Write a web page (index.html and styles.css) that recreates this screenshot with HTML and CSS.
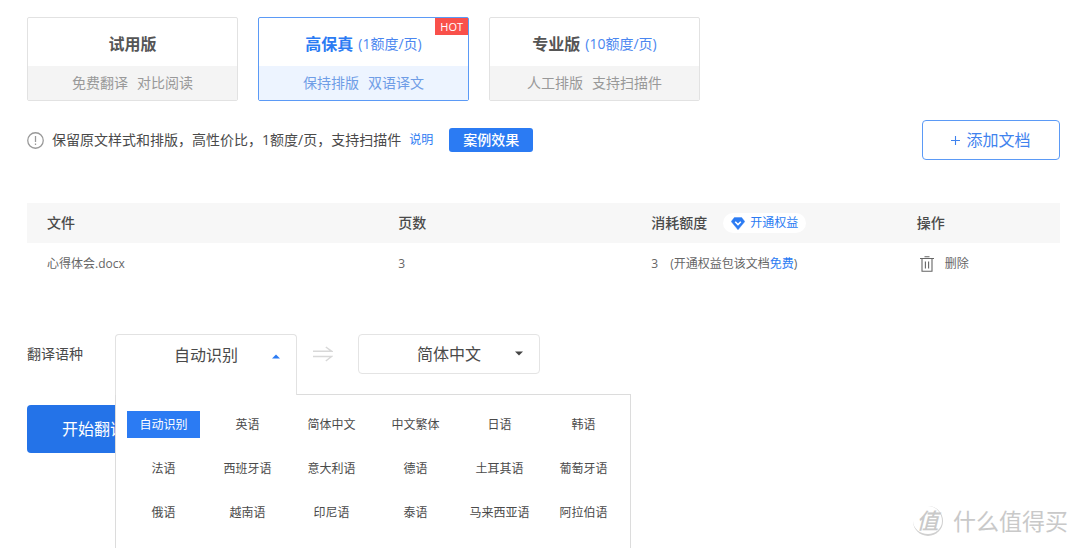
FILE: index.html
```html
<!DOCTYPE html>
<html lang="zh-CN">
<head>
<meta charset="utf-8">
<meta name="viewport" content="width=device-width, initial-scale=1">
<title>文档翻译</title>
<link rel="stylesheet" href="styles.css">
</head>
<body>
<main class="page">
  <div class="plans">
    <button type="button" class="plan">
      <span class="plan-title"><strong>试用版</strong></span>
      <span class="plan-desc"><span>免费翻译</span><span>对比阅读</span></span>
    </button>
    <button type="button" class="plan plan-active">
      <span class="plan-title"><strong>高保真</strong><span class="plan-price">(1额度/页)</span></span>
      <span class="plan-desc"><span>保持排版</span><span>双语译文</span></span>
      <span class="plan-hot">HOT</span>
    </button>
    <button type="button" class="plan">
      <span class="plan-title"><strong>专业版</strong><span class="plan-price">(10额度/页)</span></span>
      <span class="plan-desc"><span>人工排版</span><span>支持扫描件</span></span>
    </button>
  </div>

  <div class="info">
    <svg class="info-icon" width="17" height="17" viewBox="0 0 16 16" aria-hidden="true">
      <circle cx="8" cy="8" r="7.3" fill="none" stroke="#999" stroke-width="1.2"/>
      <path d="M8 3.8v5.6M8 10.8v1.4" stroke="#999" stroke-width="1.2"/>
    </svg>
    <p class="info-text">保留原文样式和排版，高性价比，1额度/页，支持扫描件</p>
    <a class="info-link" href="#">说明</a>
    <button type="button" class="btn-case">案例效果</button>
    <button type="button" class="btn-add"><svg width="9" height="9" viewBox="0 0 9 9" aria-hidden="true"><path d="M4.5 0v9M0 4.5h9" stroke="currentColor" stroke-width="1.1"/></svg>添加文档</button>
  </div>

  <table class="files">
    <thead>
      <tr>
        <th class="col-file">文件</th>
        <th class="col-pages">页数</th>
        <th class="col-cost"><span class="cost-head">消耗额度
          <a class="vip" href="#"><svg width="14" height="13" viewBox="0 0 14 13" aria-hidden="true"><path d="M3.4.4h7.2L13.8 4.6 7 12.8.2 4.6z" fill="#2b7bf3" stroke="#2b7bf3" stroke-width=".4" stroke-linejoin="round"/><path d="M4.2 4.7 7 7.6l2.8-2.9" fill="none" stroke="#fff" stroke-width="1.5"/></svg>开通权益</a></span></th>
        <th>操作</th>
      </tr>
    </thead>
    <tbody>
      <tr>
        <td>心得体会.docx</td>
        <td>3</td>
        <td><span class="cost">3<span>(开通权益包该文档<a href="#">免费</a>)</span></span></td>
        <td><button type="button" class="btn-delete"><svg width="14" height="16" viewBox="0 0 14 16" aria-hidden="true"><path d="M0 2.5h14M4.5.7h5M2 2.5v12.8h10V2.5M5.4 5.5v7M8.6 5.5v7" fill="none" stroke="#666" stroke-width="1.1"/></svg>删除</button></td>
      </tr>
    </tbody>
  </table>

  <div class="languages">
    <label class="lang-label" for="source">翻译语种</label>
    <div class="picker">
      <button type="button" id="source" class="picker-open" aria-haspopup="listbox" aria-expanded="true">自动识别</button>
      <svg class="caret caret-up" width="8" height="5" viewBox="0 0 8 5" aria-hidden="true"><path d="M0 4.5 4 .5l4 4z" fill="#2b7bf3"/></svg>
      <div class="menu" role="listbox" aria-label="翻译语种">
        <button type="button" role="option" class="option option-active" aria-selected="true">自动识别</button>
        <button type="button" role="option" class="option">英语</button>
        <button type="button" role="option" class="option">简体中文</button>
        <button type="button" role="option" class="option">中文繁体</button>
        <button type="button" role="option" class="option">日语</button>
        <button type="button" role="option" class="option">韩语</button>
        <button type="button" role="option" class="option">法语</button>
        <button type="button" role="option" class="option">西班牙语</button>
        <button type="button" role="option" class="option">意大利语</button>
        <button type="button" role="option" class="option">德语</button>
        <button type="button" role="option" class="option">土耳其语</button>
        <button type="button" role="option" class="option">葡萄牙语</button>
        <button type="button" role="option" class="option">俄语</button>
        <button type="button" role="option" class="option">越南语</button>
        <button type="button" role="option" class="option">印尼语</button>
        <button type="button" role="option" class="option">泰语</button>
        <button type="button" role="option" class="option">马来西亚语</button>
        <button type="button" role="option" class="option">阿拉伯语</button>
      </div>
    </div>
    <svg class="arrow" width="20" height="16" viewBox="0 0 20 16" aria-hidden="true"><path d="M0 5.2h18.5L12.8 1M0 10.5h18.5L12.8 15" fill="none" stroke="#d8d8d8" stroke-width="1.5"/></svg>
    <div class="picker">
      <select class="picker-select" aria-label="目标语种">
        <option>简体中文</option>
        <option>英语</option>
      </select>
      <svg class="caret caret-down" width="8" height="5" viewBox="0 0 8 5" aria-hidden="true"><path d="M0 .5h8l-4 4z" fill="#444"/></svg>
    </div>
  </div>

  <button type="button" class="btn-start">开始翻译</button>

  <div class="watermark">
    <span class="watermark-badge">值</span>
    <span>什么值得买</span>
  </div>
</main>
</body>
</html>
```

FILE: styles.css
```css
* {
  box-sizing: border-box;
}

body {
  margin: 0;
  background: #fff;
  color: #4a4a4a;
  font-family: "Open Sans", "Noto Sans CJK SC", sans-serif;
  font-size: 14px;
  line-height: 20px;
}

button,
select {
  margin: 0;
  padding: 0;
  border: 0;
  background: none;
  color: inherit;
  font: inherit;
  cursor: pointer;
}

a {
  color: #2b7bf3;
  text-decoration: none;
}

.page {
  position: relative;
  min-height: 100vh;
  padding: 17px 20px 0 27px;
  overflow: hidden;
}

.plans {
  display: flex;
  gap: 20px;
}

.plan {
  position: relative;
  display: flex;
  flex-direction: column;
  width: 211px;
  border: 1px solid #e2e2e2;
  border-radius: 2px;
}

.plan-title {
  display: flex;
  align-items: center;
  justify-content: center;
  gap: 5px;
  width: 100%;
  height: 48px;
  padding-top: 3px;
  font-size: 16px;
  color: #555;
}

.plan-price {
  font-size: 14px;
  color: #4a86f0;
}

.plan-desc {
  display: flex;
  align-items: center;
  justify-content: center;
  gap: 9px;
  width: 100%;
  height: 34px;
  background: #f4f4f4;
  color: #999;
}

.plan-active {
  border-color: #5b9af6;
}

.plan-active .plan-title {
  color: #2b7bf3;
}

.plan-active .plan-desc {
  background: #edf4ff;
  color: #6f9de6;
}

.plan-hot {
  position: absolute;
  top: 0;
  right: 0;
  padding: 0 5px;
  background: #f9504a;
  color: #fff;
  font-family: "Open Sans", sans-serif;
  font-size: 11px;
  line-height: 17px;
}

.info {
  display: flex;
  align-items: center;
  margin-top: 19px;
}

.info-icon {
  margin-right: 8px;
}

.info-text {
  margin: 0 8px 0 0;
}

.info-link {
  margin-right: 16px;
  font-size: 12px;
}

.btn-case {
  width: 84px;
  height: 24px;
  border-radius: 3px;
  background: #2b7bf3;
  color: #fff;
  font-weight: 500;
}

.btn-add {
  display: flex;
  align-items: center;
  justify-content: center;
  gap: 6px;
  width: 138px;
  height: 40px;
  margin-left: auto;
  border: 1px solid #5b9af6;
  border-radius: 4px;
  color: #3f83ee;
  font-size: 16px;
}

.files {
  width: 100%;
  margin-top: 43px;
  border-collapse: collapse;
  table-layout: fixed;
  text-align: left;
}

.files th {
  height: 40px;
  padding: 0 0 0 20px;
  background: #f7f7f7;
  font-weight: 500;
}

.files td {
  height: 42px;
  padding: 0 0 0 20px;
  color: #666;
  font-size: 12px;
}

.col-file {
  width: 34%;
}

.col-pages {
  width: 24.5%;
}

.col-cost {
  width: 25.7%;
}

.cost-head {
  display: flex;
  align-items: center;
  gap: 16px;
}

.vip {
  display: flex;
  align-items: center;
  gap: 5px;
  padding: 0 8px;
  border-radius: 10px;
  background: #fff;
  font-size: 12px;
  font-weight: 400;
}

.cost {
  display: flex;
  gap: 12px;
}

.btn-delete {
  display: flex;
  align-items: center;
  gap: 11px;
  padding-left: 3px;
}

.languages {
  display: flex;
  align-items: center;
  margin-top: 49px;
}

.lang-label {
  width: 88px;
}

.picker {
  position: relative;
  width: 182px;
  height: 40px;
}

.picker-open {
  position: absolute;
  z-index: 2;
  top: 0;
  left: 0;
  width: 100%;
  height: 61px;
  padding-bottom: 20px;
  border: 1px solid #e2e2e2;
  border-bottom: 0;
  border-radius: 4px 4px 0 0;
  background: #fff;
  font-size: 16px;
}

.picker-select {
  width: 100%;
  height: 100%;
  border: 1px solid #e4e4e4;
  border-radius: 4px;
  appearance: none;
  font-size: 16px;
  text-align: center;
  text-align-last: center;
}

.caret {
  position: absolute;
  z-index: 3;
  right: 17px;
  pointer-events: none;
}

.caret-up {
  top: 20px;
}

.caret-down {
  top: 17px;
}

.menu {
  position: absolute;
  z-index: 1;
  top: 60px;
  left: 0;
  display: grid;
  grid-template-columns: repeat(6, 73px);
  gap: 17px 11px;
  width: 516px;
  padding: 16px 11px 40px;
  border: 1px solid #dcdcdc;
  background: #fff;
}

.option {
  height: 27px;
  font-size: 12px;
  white-space: nowrap;
}

.option-active {
  background: #2b7bf3;
  color: #fff;
}

.arrow {
  margin: 0 25px 0 16px;
}

.btn-start {
  display: block;
  width: 134px;
  height: 48px;
  margin-top: 31px;
  border-radius: 4px;
  background: #2473e8;
  color: #fff;
  font-size: 16px;
}

.watermark {
  position: absolute;
  right: 12px;
  bottom: 12px;
  display: flex;
  align-items: center;
  gap: 10px;
  color: #c9c9c9;
  font-size: 23px;
  line-height: 30px;
}

.watermark-badge {
  width: 30px;
  height: 30px;
  border-right: 1px solid #d0d0d0;
  border-bottom: 2px solid #d0d0d0;
  border-radius: 50%;
  font-size: 22px;
  font-style: italic;
  font-weight: 500;
  line-height: 28px;
  text-align: center;
}
```
